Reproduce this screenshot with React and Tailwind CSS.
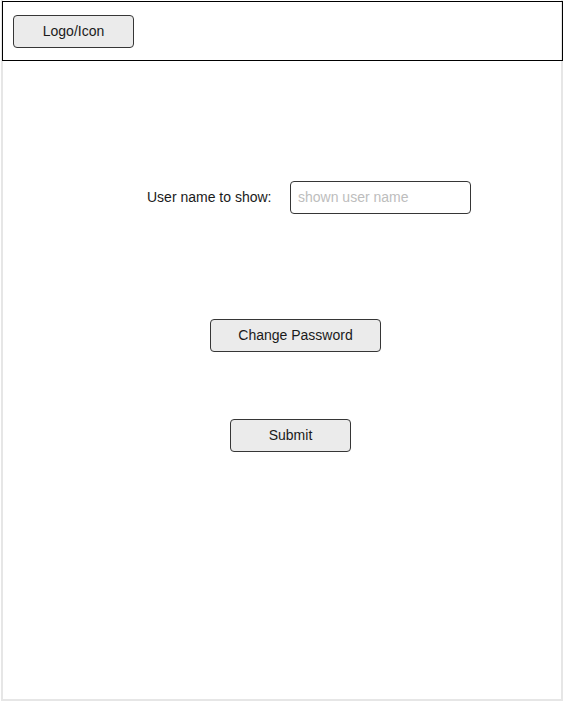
export default function App() {
  return (
    <div className="w-[564px] h-[703px] bg-white pl-px font-['Liberation_Sans',Arial,sans-serif] text-[14px] text-[#1a1a1a]">
      <div className="w-[562px] h-[701px] border-2 border-t-0 border-[#e6e6e6] flex flex-col">
        <header className="-ml-px mt-px w-[561px] h-[60px] shrink-0 border border-black pl-[10px] pt-[13px]">
          <button className="w-[121px] h-[33px] rounded-[4px] border border-[#363636] bg-[#ebebeb] text-[14px]">
            Logo/Icon
          </button>
        </header>

        <div className="mt-[120px] flex items-center">
          <label className="ml-[144px] w-[143px] leading-none mb-[2px]">User name to show:</label>
          <input
            type="text"
            placeholder="shown user name"
            className="w-[181px] h-[33px] rounded-[4px] border border-[#363636] bg-white pl-[7px] pr-[8px] pb-[2px] text-[14px] outline-none placeholder:text-[#bdbdbd]"
          />
        </div>

        <div className="mt-[105px] flex">
          <button className="ml-[207px] w-[171px] h-[33px] rounded-[4px] border border-[#363636] bg-[#ebebeb] text-[14px]">
            Change Password
          </button>
        </div>

        <div className="mt-[67px] flex">
          <button className="ml-[227px] w-[121px] h-[33px] rounded-[4px] border border-[#363636] bg-[#ebebeb] text-[14px]">
            Submit
          </button>
        </div>
      </div>
    </div>
  );
}
